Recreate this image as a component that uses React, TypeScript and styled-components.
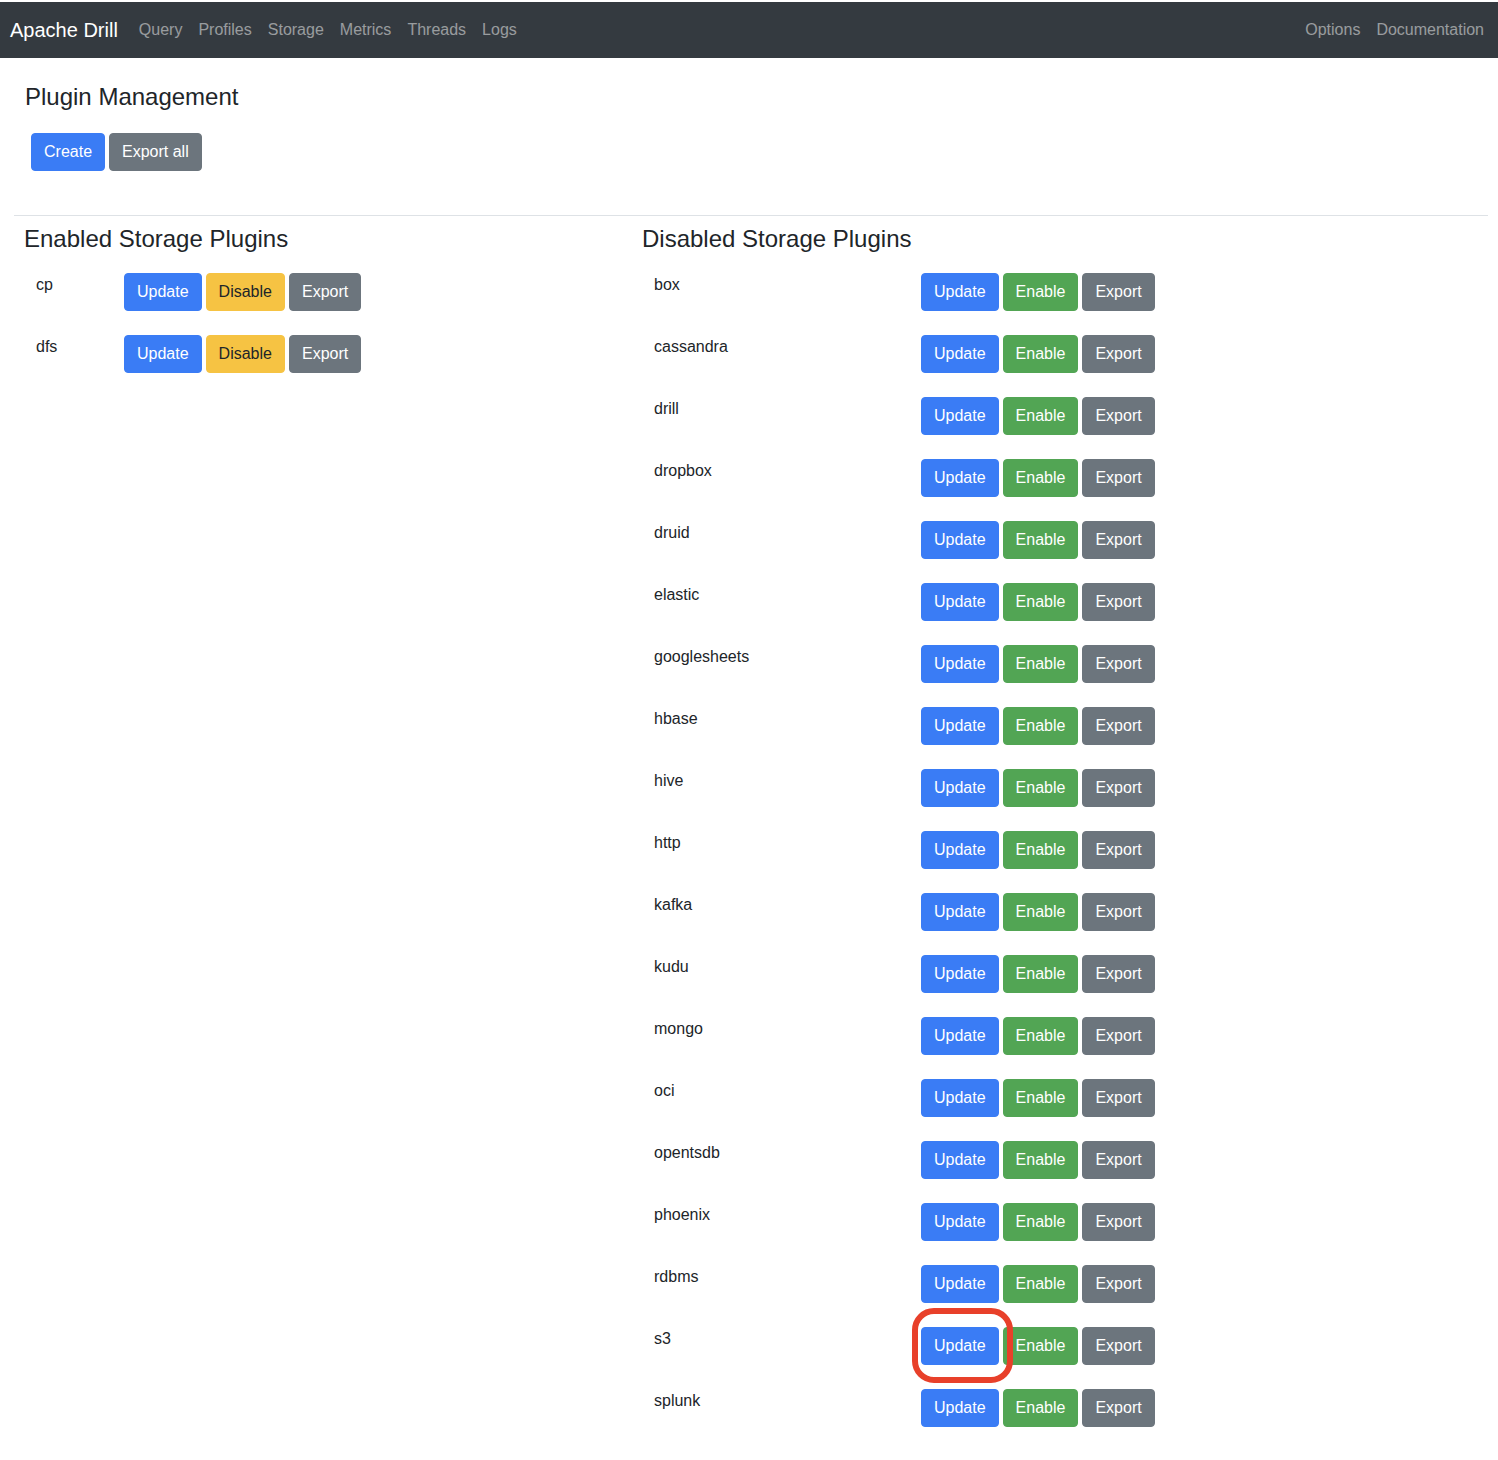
import React from "react";
import styled, { createGlobalStyle } from "styled-components";

const GlobalStyle = createGlobalStyle`
  * { box-sizing: border-box; }
  body {
    margin: 0;
    padding-top: 2px;
    background: #fff;
    font-family: "Liberation Sans", Arial, Helvetica, sans-serif;
    color: #212529;
  }
`;

const NavBar = styled.nav`
  display: flex;
  align-items: center;
  height: 56px;
  padding: 0 6px 0 10px;
  background-color: #343a40;
`;

const Brand = styled.span`
  font-size: 20px;
  color: #fff;
  margin-right: 13px;
`;

const NavLinks = styled.div`
  display: flex;
  align-items: center;
`;

const Spacer = styled.div`
  flex: 1;
`;

const NavLink = styled.a`
  font-size: 16px;
  padding: 8px;
  color: rgba(255, 255, 255, 0.5);
  text-decoration: none;
`;

const Main = styled.div`
  padding: 0 10px 20px 14px;
`;

const TopSection = styled.div`
  padding: 25px 0 44px 11px;
`;

const PageTitle = styled.h2`
  margin: 0 0 21px;
  font-size: 24px;
  font-weight: 500;
  line-height: 1.2;
`;

const ButtonBar = styled.div`
  display: flex;
  gap: 4px;
  padding-left: 6px;
`;

const variants = {
  primary: { bg: "#3a7cf5", fg: "#fff" },
  success: { bg: "#52a554", fg: "#fff" },
  warning: { bg: "#f6c343", fg: "#212529" },
  secondary: { bg: "#6c757d", fg: "#fff" },
};

type Variant = keyof typeof variants;

const Button = styled.button<{ $variant: Variant }>`
  font-family: inherit;
  font-size: 16px;
  line-height: 24px;
  padding: 6px 12px;
  border: 1px solid ${(p) => variants[p.$variant].bg};
  border-radius: 4px;
  background-color: ${(p) => variants[p.$variant].bg};
  color: ${(p) => variants[p.$variant].fg};
  cursor: pointer;
`;

const Divider = styled.hr`
  margin: 0;
  border: 0;
  border-top: 1px solid #dee2e6;
`;

const Columns = styled.div`
  display: flex;
  padding-top: 9px;
`;

const Column = styled.div<{ $width?: number }>`
  ${(p) => (p.$width ? `width: ${p.$width}px; flex: none;` : "flex: 1;")}
  padding-left: 10px;
`;

const SectionTitle = styled.h3`
  margin: 0 0 7px;
  font-size: 24px;
  font-weight: 500;
  line-height: 1.2;
`;

const Row = styled.div`
  display: flex;
  align-items: flex-start;
  padding: 12px 0;
`;

const NameCell = styled.div<{ $width: number }>`
  width: ${(p) => p.$width}px;
  flex: none;
  padding-left: 12px;
  font-size: 16px;
  line-height: 24px;
`;

const Actions = styled.div`
  display: flex;
  gap: 4px;
`;

const Highlight = styled.span`
  position: relative;
  display: inline-flex;
`;

const Ring = styled.span`
  position: absolute;
  left: -9px;
  top: -19px;
  width: 101px;
  height: 75px;
  border: 6px solid #e8402a;
  border-radius: 22px;
  pointer-events: none;
`;

const enabled = ["cp", "dfs"];
const disabled = [
  "box",
  "cassandra",
  "drill",
  "dropbox",
  "druid",
  "elastic",
  "googlesheets",
  "hbase",
  "hive",
  "http",
  "kafka",
  "kudu",
  "mongo",
  "oci",
  "opentsdb",
  "phoenix",
  "rdbms",
  "s3",
  "splunk",
];

export default function App() {
  return (
    <>
      <GlobalStyle />
      <NavBar>
        <Brand>Apache Drill</Brand>
        <NavLinks>
          {["Query", "Profiles", "Storage", "Metrics", "Threads", "Logs"].map((l) => (
            <NavLink key={l}>{l}</NavLink>
          ))}
        </NavLinks>
        <Spacer />
        <NavLinks>
          <NavLink>Options</NavLink>
          <NavLink>Documentation</NavLink>
        </NavLinks>
      </NavBar>
      <Main>
        <TopSection>
          <PageTitle>Plugin Management</PageTitle>
          <ButtonBar>
            <Button $variant="primary">Create</Button>
            <Button $variant="secondary">Export all</Button>
          </ButtonBar>
        </TopSection>
        <Divider />
        <Columns>
          <Column $width={618}>
            <SectionTitle>Enabled Storage Plugins</SectionTitle>
            {enabled.map((name) => (
              <Row key={name}>
                <NameCell $width={100}>{name}</NameCell>
                <Actions>
                  <Button $variant="primary">Update</Button>
                  <Button $variant="warning">Disable</Button>
                  <Button $variant="secondary">Export</Button>
                </Actions>
              </Row>
            ))}
          </Column>
          <Column>
            <SectionTitle>Disabled Storage Plugins</SectionTitle>
            {disabled.map((name) => (
              <Row key={name}>
                <NameCell $width={279}>{name}</NameCell>
                <Actions>
                  {name === "s3" ? (
                    <Highlight>
                      <Button $variant="primary">Update</Button>
                      <Ring />
                    </Highlight>
                  ) : (
                    <Button $variant="primary">Update</Button>
                  )}
                  <Button $variant="success">Enable</Button>
                  <Button $variant="secondary">Export</Button>
                </Actions>
              </Row>
            ))}
          </Column>
        </Columns>
      </Main>
    </>
  );
}
